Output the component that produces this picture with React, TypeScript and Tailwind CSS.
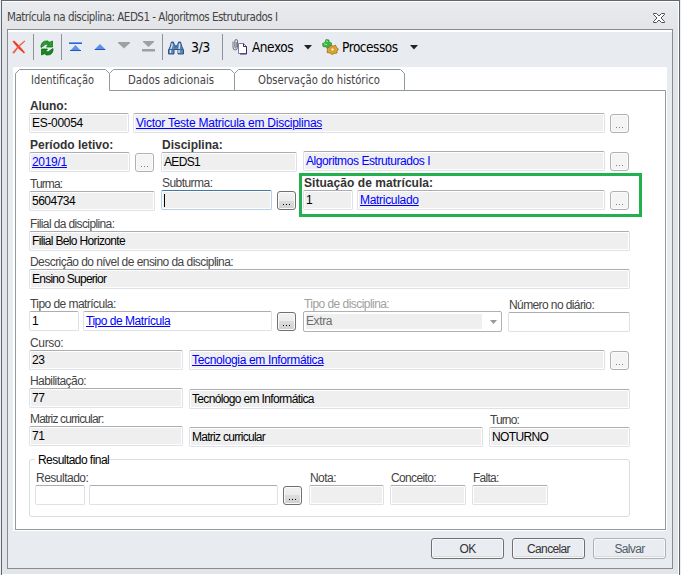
import clsx from "clsx";
import type { ReactNode } from "react";

type FieldProps = {
  label?: string;
  value?: string;
  width: string;
  bold?: boolean;
  link?: boolean;
  plain?: boolean;
  editable?: boolean;
  focused?: boolean;
  className?: string;
  labelClass?: string;
  textClass?: string;
};

type LabelProps = {
  text?: string;
  bold?: boolean;
  muted?: boolean;
  className?: string;
};

const Label = ({ text, bold, muted, className }: LabelProps) => (
  <div
    className={clsx(
      "h-[15px] pl-px leading-[17px] whitespace-pre",
      bold && "font-bold",
      muted ? "text-[#a0a0a0]" : bold ? "text-[#333]" : "text-[#444]",
      className ?? (bold ? "tracking-normal" : "tracking-[-0.55px]")
    )}
  >
    {text}
  </div>
);

const Field = ({
  label,
  value,
  width,
  bold,
  link,
  plain,
  editable,
  focused,
  className,
  labelClass,
  textClass,
}: FieldProps) => (
  <div className={clsx("shrink-0", width, className)}>
    <Label text={label} bold={bold} className={labelClass} />
    <div
      className={clsx(
        "flex h-5 items-center rounded-[2px] border pl-[2px] whitespace-pre shadow-[inset_0_0_0_1px_#fff]",
        focused ? "border-[#b5cfe7] border-t-[#3d7bad]" : "border-[#dfe1e8] border-t-[#abadb3]",
        editable ? "bg-white" : "bg-[#efefef]",
        link ? "text-[#0000ff]" : "text-black"
      )}
    >
      {focused && <span className="h-[13px] w-px bg-black" />}
      <span
        className={clsx(
          "leading-[14px]",
          textClass ?? (link ? "tracking-[-0.3px]" : "tracking-[-0.65px]"),
          link && !plain && "underline underline-offset-1"
        )}
      >
        {value}
      </span>
    </div>
  </div>
);

const Dots = ({ disabled, className }: { disabled?: boolean; className: string }) => (
  <button
    className={clsx(
      "flex h-[19px] w-[19px] shrink-0 items-end justify-center gap-[2px] rounded-[3px] border pb-[4px] shadow-[inset_0_0_0_1px_#fbfbfb]",
      disabled
        ? "border-[#adb2b5] bg-[#f4f4f4] text-[#838383]"
        : "border-[#707070] bg-[linear-gradient(#f2f2f2,#ebebeb_50%,#dddddd_50%,#cfcfcf)] text-black",
      className
    )}
  >
    <i className="size-px bg-current" />
    <i className="size-px bg-current" />
    <i className="size-px bg-current" />
  </button>
);

const Row = ({ height, children }: { height: string; children: ReactNode }) => (
  <div className={clsx("flex items-start", height)}>{children}</div>
);

const Separator = ({ className }: { className?: string }) => (
  <div className={clsx("h-[26px] w-px shrink-0 bg-[#8e9296]", className)} />
);

const Caret = () => (
  <svg width="8" height="5" viewBox="0 0 8 5">
    <path d="M0 0h8L4 4.500z" fill="#222" />
  </svg>
);

const Toolbar = () => (
  <div className="flex h-[30px] items-center font-['DejaVu_Sans_Condensed','DejaVu_Sans',sans-serif] text-[13.5px] tracking-[-0.45px] text-black">
    <svg className="ml-1" width="14" height="14" viewBox="0 0 14 14">
      <path d="M.5 1.500L2 .5Q6 4 13 12.500L12 13.500Q5 8 .5 1.500z" fill="#ef3b25" />
      <path d="M12.500 .5l.8.8Q7 6 2.500 13L1 13.500l-.5-1Q6 5 12.500.5z" fill="#f4573c" />
    </svg>
    <Separator className="ml-[7px]" />
    <svg className="mt-px ml-[6px]" width="14" height="16" viewBox="0 0 14 16">
      <path d="M1 7.500V5.500Q2 1 6.500 1H8l1 1.500L12.500 1v6H6.500l2-2.500Q5 3.500 4 5.500z" fill="#23a12c" stroke="#0a6a12" strokeWidth=".7" />
      <path d="M13 8.500v2Q12 15 7.500 15H6l-1-1.500L1.500 15V9h6l-2 2.500Q9 12.500 10 10.500z" fill="#128b1e" stroke="#075e10" strokeWidth=".7" />
    </svg>
    <Separator className="ml-[7px]" />
    <svg className="ml-[7px]" width="13" height="12" viewBox="0 0 13 12">
      <path d="M0 1h13v2H0z" fill="#2d63d2" />
      <path d="M0 1.500h13" stroke="#6c9aec" />
      <path d="M6.500 4l5.500 6H1z" fill="#5c91ea" />
      <path d="M1 9.500h11" stroke="#2454bc" />
    </svg>
    <svg className="mt-px ml-3" width="12" height="7" viewBox="0 0 12 7">
      <path d="M6 0l6 6H0z" fill="#5c91ea" />
      <path d="M1 5.500h10" stroke="#2454bc" />
    </svg>
    <svg className="-mt-[3px] ml-3" width="12" height="7" viewBox="0 0 12 7">
      <path d="M0 0h12v1L6 6.500 0 1z" fill="#a0a0a0" />
    </svg>
    <svg className="-mt-px ml-3" width="13" height="11" viewBox="0 0 13 11">
      <path d="M1 0h11v1L6.500 6 1 1zM0 8h13v2.500H0z" fill="#a0a0a0" />
    </svg>
    <Separator className="ml-[7px]" />
    <svg className="mt-px ml-[5px]" width="16" height="14" viewBox="0 0 16 14">
      <path
        d="M3.500 1h2l.5 2 1.500 2h1L10 3l.5-2h2l1.500 5 1.500 3v4H10V8.500H6V13H.5V9L2 6z"
        fill="#5c86b5"
        stroke="#234a7c"
        strokeWidth=".9"
      />
      <path d="M4 2.500v2L2.500 9v3M11.500 2.500v2L11 9.500V12" fill="none" stroke="#d7ebfb" strokeWidth="1.300" />
      <path d="M1 8.500h5M10 8.500h5M6 6h4" stroke="#3968a0" />
    </svg>
    <span className="ml-[7px] w-[31px] text-[14px] tracking-[-0.5px]">3/3</span>
    <Separator />
    <svg className="ml-[9px]" width="16" height="16" viewBox="0 0 16 16">
      <path d="M6.500 4.500h5l3 3v7h-8z" fill="#fff" stroke="#7f79ac" />
      <path d="M11.500 4.500v3h3v7.500H8" fill="none" stroke="#382766" />
      <path
        d="M1 2.500v6q0 2.500 2.200 2.500T5.500 8.500V2Q5.500.5 4.200.5T2.800 2v6q0 1 .7 1t.7-1V3"
        fill="none"
        stroke="#5f6468"
        strokeWidth=".9"
      />
    </svg>
    <span className="ml-1 w-[52px]">Anexos</span>
    <Caret />
    <svg className="ml-[10px]" width="17" height="16" viewBox="0 0 17 16">
      <path d="M4 .5l3 .5v2l2.500 1v2.500L7 7.500 6 9.500 4 8 1 7.500.5 4.500 3 3.500z" fill="#3bb642" stroke="#1c7a2a" strokeWidth=".6" />
      <path d="M4 2l2 .5M2 5l3 .5" stroke="#a5ec9c" />
      <path d="M9 6.500l2.500.5 2-1 1 2.500 2 1.500-1.500 2v2l-3 .5-2 1-2-1.500-3-.5.500-2.500L5 9l3-1z" fill="#dfa52c" stroke="#8f6519" strokeWidth=".7" />
      <circle cx="10.500" cy="10.500" r="1.700" fill="#fbeec0" stroke="#a87820" strokeWidth=".6" />
    </svg>
    <span className="ml-[3px] w-[68px]">Processos</span>
    <Caret />
  </div>
);

const Tabs = () => (
  <svg className="block" width="651" height="22" viewBox="0 0 651 22">
    <path
      d="M.5 22V4.500l4-4h86l4 4V21.500H650.500V22M94.500 4.500l4-4h117l4 4v17M219.500 4.500l4-4h162l4 4v17"
      fill="none"
      stroke="#919b9c"
    />
    <g fill="#444" fontSize="12" fontFamily="DejaVu Sans Condensed, DejaVu Sans, sans-serif">
      <text x="16" y="15" textLength="63" lengthAdjust="spacingAndGlyphs">Identificação</text>
      <text x="113" y="15" textLength="86" lengthAdjust="spacingAndGlyphs">Dados adicionais</text>
      <text x="243" y="15" textLength="122" lengthAdjust="spacingAndGlyphs">Observação do histórico</text>
    </g>
  </svg>
);

const Form = () => (
  <div className="px-[13px] pt-[7px]">
    <Row height="h-[39px]">
      <Field label="Aluno:" value="ES-00054" width="w-[100px]" bold textClass="tracking-[-0.3px]" labelClass="tracking-[-0.1px]" />
      <Field value="Victor Teste Matricula em Disciplinas" width="w-[472px]" link className="ml-1" textClass="tracking-[-0.24px]" />
      <Dots disabled className="mt-4 ml-[5px]" />
    </Row>
    <Row height="h-[39px]">
      <Field label="Período letivo:" value="2019/1" width="w-[101px]" bold link />
      <Dots disabled className="mt-4 ml-[5px]" />
      <Field label="Disciplina:" value="AEDS1" width="w-[136px]" bold className="ml-[7px]" />
      <Field
        value="Algoritmos Estruturados I"
        width="w-[302px]"
        link
        plain
        className="-mt-px ml-[6px]"
        textClass="tracking-[-0.42px]"
      />
      <Dots disabled className="mt-[15px] ml-[5px]" />
    </Row>
    <Row height="h-10">
      <Field label="Turma:" value="5604734" width="w-[126px]" textClass="tracking-[-0.5px]" labelClass="tracking-[-0.9px]" />
      <Field label="Subturma:" width="w-[111px]" focused className="-mt-px ml-[6px]" />
      <Dots className="mt-[15px] ml-[5px]" />
      <div className="relative -mt-px ml-[7px] flex items-start">
        <Field label="Situação de matrícula:" value="1" width="w-[50px]" bold labelClass="tracking-[0.05px]" />
        <Field value="Matriculado" width="w-[248px]" link className="ml-1" />
        <Dots disabled className="mt-4 ml-[5px]" />
        <div className="absolute -top-[2px] -left-1 h-11 w-[343px] border-3 border-[#22b14c]" />
      </div>
    </Row>
    <Row height="h-[38px]">
      <Field label="Filial da disciplina:" value="Filial Belo Horizonte" width="w-[601px]" labelClass="tracking-[-0.62px]" />
    </Row>
    <Row height="h-[42px]">
      <Field label="Descrição do nível de ensino da disciplina:" value="Ensino Superior" width="w-[601px]" textClass="tracking-[-0.75px]" />
    </Row>
    <Row height="h-[39px]">
      <Field label="Tipo de matrícula:" value="1" width="w-[50px]" editable />
      <Field value="Tipo de Matrícula" width="w-[189px]" editable link className="ml-1" textClass="tracking-[-0.48px]" />
      <Dots className="mt-4 ml-[5px]" />
      <div className="ml-[7px] w-[199px] shrink-0">
        <Label text="Tipo de disciplina:" muted />
        <div className="flex h-[21px] items-center justify-between rounded-[2px] border border-[#adb2b5] bg-white pr-1 pl-[2px] text-[#6d6d6d]">
          <div className="h-[15px] w-[176px] bg-[#efefef] leading-[15px] tracking-[-0.4px]">Extra</div>
          <svg width="7" height="4" viewBox="0 0 7 4">
            <path d="M0 0h7L3.500 4z" fill="#999" />
          </svg>
        </div>
      </div>
      <Field label="Número no diário:" width="w-[122px]" editable className="mt-px ml-[6px]" labelClass="tracking-[-0.6px]" />
    </Row>
    <Row height="h-[38px]">
      <Field label="Curso:" value="23" width="w-[154px]" labelClass="tracking-[-0.35px]" textClass="tracking-[-0.3px]" />
      <Field value="Tecnologia em Informática" width="w-[416px]" link className="ml-[6px]" textClass="tracking-[-0.34px]" />
      <Dots disabled className="mt-4 ml-[5px]" />
    </Row>
    <Row height="h-[38px]">
      <Field label="Habilitação:" value="77" width="w-[154px]" textClass="tracking-[-0.3px]" />
      <Field value="Tecnólogo em Informática" width="w-[441px]" className="mt-px ml-[6px]" />
    </Row>
    <Row height="h-[48px]">
      <Field label="Matriz curricular:" value="71" width="w-[154px]" labelClass="tracking-[-0.85px]" textClass="tracking-[-0.3px]" />
      <Field value="Matriz curricular" width="w-[294px]" className="mt-px ml-[6px]" textClass="tracking-[-0.72px]" />
      <Field label="Turno:" value="NOTURNO" width="w-[141px]" className="mt-px ml-[6px]" labelClass="tracking-[-0.9px]" />
    </Row>
    <div className="h-[58px] w-[601px] rounded-[3px] border border-[#d5dfe5] pl-[5px]">
      <div className="-mt-[7px] h-[17px]">
        <span className="block w-[74px] bg-white pl-[3px] leading-[15px] tracking-[-0.55px] whitespace-nowrap text-black">
          Resultado final
        </span>
      </div>
      <div className="flex items-start">
        <Field label="Resultado:" width="w-[50px]" editable labelClass="tracking-[-0.5px]" />
        <Field width="w-[189px]" editable className="ml-1" />
        <Dots className="mt-4 ml-[5px]" />
        <Field label="Nota:" width="w-[75px]" className="ml-[7px]" />
        <Field label="Conceito:" width="w-[76px]" className="ml-[6px]" labelClass="tracking-[-0.65px]" />
        <Field label="Falta:" width="w-[76px]" className="ml-[6px]" labelClass="tracking-[-0.75px]" />
      </div>
    </div>
  </div>
);

const ActionButton = ({ text, disabled }: { text: string; disabled?: boolean }) => (
  <button
    className={clsx(
      "h-[21px] w-[73px] rounded-[3px] border bg-[#e9ecf1] leading-[18px] tracking-[-0.65px] shadow-[inset_0_0_0_1px_#f6f8fa,inset_0_-2px_0_#d9dbd6]",
      disabled ? "border-[#adb2b5] text-[#525e68]" : "border-[#707070] text-[#333]"
    )}
  >
    {text}
  </button>
);

const App = () => {
  return (
    <div className="flex h-[575px] w-[681px] bg-[#e7eef5] pl-px font-['Liberation_Sans',Arial,sans-serif] text-[12px]">
      <div className="flex h-[575px] w-[679px] flex-col border-x border-t border-[#5f6670] bg-linear-to-b from-[#e9ebef] to-[#e2e4e7] to-[30px] pr-[6px] pl-[5px] shadow-[inset_-1px_1px_0_#fff,inset_0_-1px_0_#fff]">
        <div className="flex h-7 items-center justify-between pr-2 font-['DejaVu_Sans_Condensed','DejaVu_Sans',sans-serif] text-[11.5px] tracking-[-0.5px] text-[#444]">
          <span className="pt-[6px]">Matrícula na disciplina: AEDS1 - Algoritmos Estruturados I</span>
          <svg className="mt-[5px]" width="12" height="10" viewBox="0 0 12 10">
            <path
              d="M.5.5h3L6 3 8.500.5h3v1L8 5l3.500 3.500v1h-3L6 7 3.500 9.500h-3v-1L4 5 .5 1.500z"
              fill="#fff"
              stroke="#4b5058"
            />
          </svg>
        </div>
        <div className="h-[540px] border border-[#888c90] bg-[#e8ebf0]">
          <div className="h-[2px] bg-white" />
          <div className="h-[35px]">
            <Toolbar />
          </div>
          <div className="ml-[5px] h-[464px] w-[654px] bg-white pt-[2px] pl-[2px]">
            <Tabs />
            <div className="h-[439px] w-[651px] border-x border-b border-[#919b9c]">
              <Form />
            </div>
          </div>
          <div className="flex justify-end gap-2 pt-[7px] pr-[6px]">
            <ActionButton text="OK" />
            <ActionButton text="Cancelar" />
            <ActionButton text="Salvar" disabled />
          </div>
        </div>
      </div>
    </div>
  );
};

export default App;
